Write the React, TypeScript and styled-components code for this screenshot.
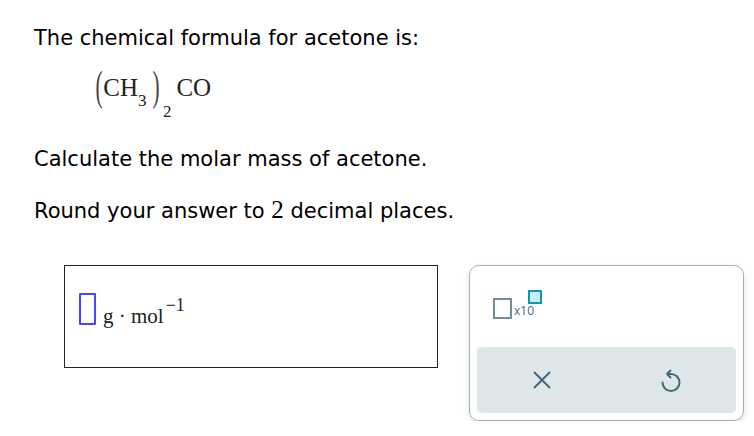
import React from "react";
import styled, { createGlobalStyle } from "styled-components";

const GlobalStyle = createGlobalStyle`
  body {
    margin: 0;
    background: #ffffff;
    font-family: "DejaVu Sans", Verdana, sans-serif;
    color: #000;
  }
`;

const Page = styled.div`
  padding: 26px 0 0 34px;
`;

const Para = styled.p<{ $top?: number }>`
  margin: ${(p) => p.$top ?? 0}px 0 0 0;
  font-size: 21px;
  line-height: 24px;
  white-space: nowrap;
`;

const Num = styled.span`
  font-family: "Liberation Serif", "Times New Roman", serif;
  font-size: 25px;
  line-height: 18px;
`;

const Formula = styled.div`
  margin: 16px 0 0 61px;
  height: 44px;
  font-family: "Liberation Serif", "Times New Roman", serif;
  font-size: 25px;
  line-height: 44px;
  color: #222;
  white-space: nowrap;
`;

const Paren = styled.span<{ $left?: number }>`
  display: inline-block;
  line-height: 1;
  margin-left: ${(p) => p.$left ?? 0}px;
  transform: translateY(-2px) scale(0.85, 1.66);
  color: #444;
`;

const Sub = styled.span<{ $drop: number; $left?: number }>`
  font-size: 17px;
  line-height: 1;
  vertical-align: -${(p) => p.$drop}px;
  margin-left: ${(p) => p.$left ?? 0}px;
`;

const Tail = styled.span`
  margin-left: 5px;
`;

const Row = styled.div`
  display: flex;
  align-items: flex-start;
  gap: 31px;
  margin: 42px 0 0 30px;
`;

const AnswerBox = styled.div`
  box-sizing: border-box;
  width: 374px;
  height: 103px;
  border: 1px solid #222;
  padding: 27px 0 0 14px;
  display: flex;
  align-items: flex-start;
`;

const Slot = styled.div`
  box-sizing: border-box;
  width: 17px;
  height: 32px;
  border: 2px solid #4646ff;
  border-radius: 1px;
`;

const Unit = styled.span`
  margin: 3px 0 0 7px;
  font-family: "Liberation Serif", "Times New Roman", serif;
  font-size: 21px;
  line-height: 28px;
  color: #222;
  white-space: nowrap;
`;

const Sup = styled.span`
  font-size: 18px;
  line-height: 1;
  vertical-align: 12px;
  margin-left: 2px;
`;

const Panel = styled.div`
  box-sizing: border-box;
  width: 275px;
  height: 156px;
  border: 1px solid #a1b2b8;
  border-radius: 10px;
  box-shadow: 0 3px 6px rgba(0, 0, 0, 0.12);
  padding: 0 7px 7px 7px;
  display: flex;
  flex-direction: column;
`;

const Tools = styled.div`
  flex: 1;
  padding: 24px 0 0 16px;
`;

const ExpIcon = styled.div`
  position: relative;
  display: flex;
  align-items: flex-start;
  width: 50px;
  height: 30px;
`;

const BigBox = styled.div`
  box-sizing: border-box;
  width: 19px;
  height: 21px;
  margin-top: 8px;
  border: 2px solid #6f8e99;
  background: #fff;
`;

const ExpLabel = styled.span`
  margin: 14px 0 0 2px;
  font-family: "Open Sans", sans-serif;
  font-size: 12px;
  line-height: 14px;
  color: #3e6a7a;
`;

const SmallBox = styled.div`
  position: absolute;
  left: 35px;
  top: 0;
  box-sizing: border-box;
  width: 14px;
  height: 14px;
  border: 2px solid #0e9ab2;
  background: #c8edf4;
`;

const Keys = styled.div`
  height: 66px;
  border-radius: 5px;
  background: #dfe6e8;
  display: grid;
  grid-template-columns: 1fr 1fr;
`;

const Key = styled.div`
  display: flex;
  align-items: center;
  justify-content: center;
  color: #3d6b7b;
`;

const App: React.FC = () => {
  return (
    <>
      <GlobalStyle />
      <Page>
        <Para>The chemical formula for acetone is:</Para>
        <Formula>
          <Paren>(</Paren>CH<Sub $drop={10}>3</Sub>
          <Paren $left={5}>)</Paren>
          <Sub $drop={21} $left={3}>2</Sub>
          <Tail>CO</Tail>
        </Formula>
        <Para $top={37}>Calculate the molar mass of acetone.</Para>
        <Para $top={28}>
          Round your answer to <Num>2</Num> decimal places.
        </Para>
        <Row>
          <AnswerBox>
            <Slot />
            <Unit>
              g · mol<Sup>−1</Sup>
            </Unit>
          </AnswerBox>
          <Panel>
            <Tools>
              <ExpIcon>
                <BigBox />
                <ExpLabel>x10</ExpLabel>
                <SmallBox />
              </ExpIcon>
            </Tools>
            <Keys>
              <Key>
                <svg width="18" height="18" viewBox="0 0 18 18" fill="none">
                  <path d="M1 1L17 17M17 1L1 17" stroke="currentColor" strokeWidth="2" />
                </svg>
              </Key>
              <Key>
                <svg width="20" height="26" viewBox="0 0 20 26" fill="none">
                  <path
                    d="M9.5 3.5L6 7L9.5 10.5M6 7H10A8.5 8.5 0 1 1 1.5 15.5"
                    stroke="currentColor"
                    strokeWidth="2"
                    strokeLinecap="round"
                    strokeLinejoin="round"
                  />
                </svg>
              </Key>
            </Keys>
          </Panel>
        </Row>
      </Page>
    </>
  );
};

export default App;
